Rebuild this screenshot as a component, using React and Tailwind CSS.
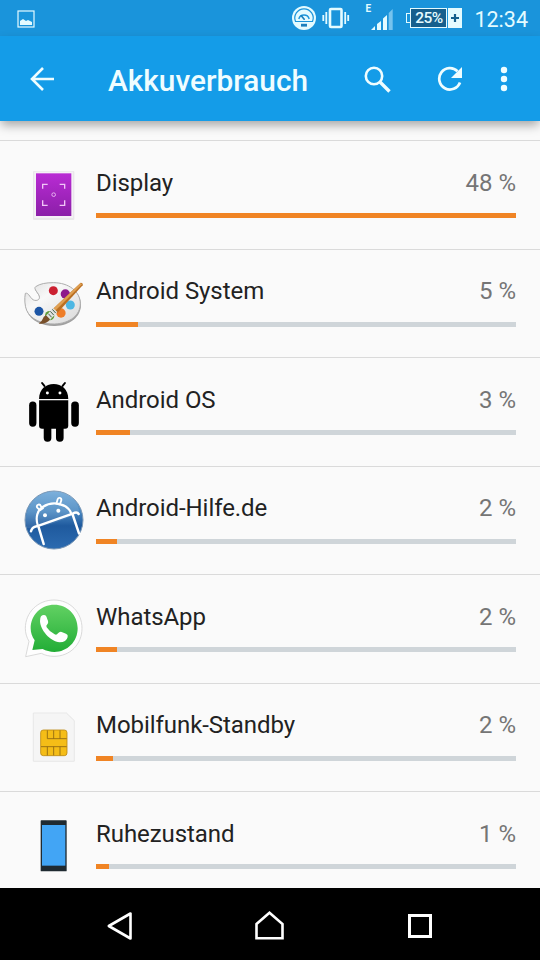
import React from "react";

const DisplayIcon = () => (
  <svg viewBox="42 12 180 180" className="h-[60px] w-[60px]">
    <defs>
      <linearGradient id="display-bg" x1="0" y1="0" x2="0" y2="1">
        <stop offset="0" stopColor="#b92bd4" />
        <stop offset="1" stopColor="#8b1fa8" />
      </linearGradient>
    </defs>
    <rect x="69" y="33" width="124" height="147" rx="3" fill="#e9e8ea" />
    <rect x="73" y="35" width="116" height="139" fill="#f5f0f6" />
    <rect x="78" y="40" width="106" height="128" fill="url(#display-bg)" />
    <g fill="none" stroke="#f0c6f7" strokeWidth="4">
      <path d="M98 86V73h15M149 73h15v13M98 121v15h15M149 136h15v-15" />
      <circle cx="131" cy="104" r="5.5" strokeWidth="2.5" />
    </g>
  </svg>
);

const PaletteIcon = () => (
  <svg viewBox="42 24 180 180" className="h-[60px] w-[60px]">
    <defs>
      <linearGradient id="palette-bg" x1="0" y1="0" x2="1" y2="1">
        <stop offset="0" stopColor="#dedede" />
        <stop offset="0.35" stopColor="#f8f8f8" />
        <stop offset="1" stopColor="#d8d8d8" />
      </linearGradient>
    </defs>
    <path
      d="M46 85C43 100 44 123 50 136C62 166 98 181 134 180C180 178 212 152 212 116C212 79 176 53 130 53C108 53 90 56 77 65C70 70 81 80 86 89C92 100 86 108 74 106C61 104 57 81 46 85Z"
      fill="#a0a0a0"
      transform="translate(1 3)"
    />
    <path
      d="M46 85C43 100 44 123 50 136C62 164 98 178 134 177C180 175 211 150 211 116C211 79 176 53 130 53C108 53 90 56 77 65C70 70 81 80 86 89C92 100 86 108 74 106C61 104 57 81 46 85Z"
      fill="url(#palette-bg)"
      stroke="#adadad"
      strokeWidth="3"
    />
    <circle cx="130" cy="77" r="13.5" fill="#cb2031" />
    <circle cx="166" cy="87" r="14" fill="#8e1b8c" />
    <circle cx="181" cy="120" r="13.5" fill="#4db7e3" />
    <circle cx="153" cy="144" r="14" fill="#ee7d28" />
    <circle cx="119" cy="152" r="14" fill="#5c9a35" />
    <circle cx="87" cy="139" r="13.5" fill="#1c55a5" />
    <path d="M212 53q8 0 6 8L142 144l-14-11Z" fill="#b96f22" />
    <path d="M212 54L128 133l7 5L216 58Z" fill="#e0a052" />
    <path d="M129 129l13 12-22 24-13-12Z" fill="#dfe3e0" />
    <path d="M127 133l10 11M121 139l10 11M115 146l10 11" stroke="#47604d" strokeWidth="3" />
    <path d="M108 151l12 12q-10 16-34 13 10-7 12-14 2-7 10-11Z" fill="#79502a" />
  </svg>
);

const AndroidIcon = () => (
  <svg viewBox="42 33 180 184" className="h-[61px] w-[60px]">
    <path d="M103 48l-7-9M158 48l7-9" stroke="#000" strokeWidth="6" strokeLinecap="round" />
    <path d="M87 87C87 58 107 42 131 42s44 16 44 45Z" />
    <circle cx="112" cy="69" r="4.5" fill="#fff" />
    <circle cx="150" cy="69" r="4.5" fill="#fff" />
    <path d="M87 91h88v77q0 9-9 9H96q-9 0-9-9Z" />
    <rect x="57" y="95" width="22" height="76" rx="11" />
    <rect x="184" y="95" width="23" height="76" rx="11" />
    <rect x="101" y="160" width="23" height="56" rx="11" />
    <rect x="138" y="160" width="23" height="56" rx="11" />
  </svg>
);

const HilfeIcon = () => (
  <svg viewBox="42 30 180 180" className="h-[60px] w-[60px]">
    <defs>
      <linearGradient id="hilfe-bg" x1="0" y1="0" x2="0" y2="1">
        <stop offset="0" stopColor="#6ea8d8" />
        <stop offset="0.35" stopColor="#4b89c2" />
        <stop offset="0.6" stopColor="#1f5a9e" />
        <stop offset="1" stopColor="#2c6bb0" />
      </linearGradient>
    </defs>
    <circle cx="132" cy="120" r="87" fill="url(#hilfe-bg)" stroke="#7b98b6" strokeWidth="3" />
    <path d="M50 145Q110 145 208 97Q200 38 132 34Q56 42 46 120Z" fill="#fff" opacity="0.1" />
    <g fill="none" stroke="#fff" strokeLinecap="round" strokeLinejoin="round">
      <path d="M63 154Q66 141 80 139L188 101Q201 94 206 102" strokeWidth="7.5" />
      <path d="M83 135C76 112 82 91 98 81C115 70 134 68 151 73C168 77 180 88 184 102" strokeWidth="6.5" />
      <path d="M86 142L101 192M188 104L207 160" strokeWidth="7.5" />
      <path d="M90 91L81 82Q79 76 85 74Q90 72 93 79L99 85Z" strokeWidth="5.5" />
      <path d="M139 71L143 58Q145 52 151 54Q156 57 153 64L149 74Z" strokeWidth="5.5" />
    </g>
    <circle cx="105" cy="106" r="6" fill="#fff" />
    <circle cx="145" cy="92" r="6" fill="#fff" />
  </svg>
);

const WhatsAppIcon = () => (
  <svg viewBox="42 24 180 180" className="h-[60px] w-[60px]">
    <defs>
      <linearGradient id="wa-bg" x1="0" y1="0" x2="0" y2="1">
        <stop offset="0" stopColor="#62d163" />
        <stop offset="1" stopColor="#22ad36" />
      </linearGradient>
    </defs>
    <path
      d="M132 30C180 30 216 67 216 115C216 163 180 199 132 199C118 199 105 196 94 190L47 200L57 154C50 142 46 129 46 115C46 67 84 30 132 30Z"
      fill="#fefefe"
      stroke="#d2d2d2"
      strokeWidth="2.5"
    />
    <path
      d="M133 44C172 44 203 75 203 115C203 155 172 186 133 186C120 186 108 182 98 177L67 180L74 151C66 140 62 128 62 115C62 75 93 44 133 44Z"
      fill="url(#wa-bg)"
    />
    <path
      d="M93 79Q99 73 106 76Q110 79 112 88Q117 98 112 103Q107 107 110 112Q119 126 134 133Q140 136 144 130Q149 124 155 126L168 131Q175 134 173 141Q169 157 149 157C120 154 91 120 90 93Q90 84 93 79Z"
      fill="#fff"
    />
  </svg>
);

const SimIcon = () => (
  <svg viewBox="42 21 180 180" className="h-[60px] w-[60px]">
    <path d="M70 39h99l24 23v122H70Z" fill="#f5f5f5" stroke="#e6e6e6" strokeWidth="2.5" />
    <path d="M169 39l24 23" stroke="#e8e8e8" strokeWidth="2" />
    <rect x="92" y="90" width="79" height="77" rx="8" fill="#f5bd17" stroke="#bd8a13" strokeWidth="2.5" />
    <path
      d="M112 91v25h58M131 91v25M150 91v25M93 140h77M112 140v26M131 140v26M150 140v26"
      fill="none"
      stroke="#8a6512"
      strokeWidth="2.5"
    />
  </svg>
);

const PhoneIcon = () => (
  <svg viewBox="42 15 180 180" className="h-[60px] w-[60px]">
    <rect x="92" y="31" width="78" height="153" rx="2" fill="#1f2a31" />
    <rect x="96" y="45" width="70" height="122" fill="#42a5f5" />
  </svg>
);

// bar is the filled width of the 420px track
const items = [
  { name: "Display", percent: "48 %", bar: 420, Icon: DisplayIcon },
  { name: "Android System", percent: "5 %", bar: 42, Icon: PaletteIcon },
  { name: "Android OS", percent: "3 %", bar: 34, Icon: AndroidIcon },
  { name: "Android-Hilfe.de", percent: "2 %", bar: 21, Icon: HilfeIcon },
  { name: "WhatsApp", percent: "2 %", bar: 21, Icon: WhatsAppIcon },
  { name: "Mobilfunk-Standby", percent: "2 %", bar: 17, Icon: SimIcon },
  { name: "Ruhezustand", percent: "1 %", bar: 13, Icon: PhoneIcon },
];

function StatusBar() {
  return (
    <div className="flex h-9 shrink-0 items-center bg-[#1a94db] pr-3 pl-[17px] text-[#e4fbff]">
      <svg viewBox="0 0 18 18" className="mt-0.5 h-[18px] w-[18px]">
        <rect x="1" y="1" width="16" height="16" fill="none" stroke="currentColor" strokeWidth="1.2" />
        <path d="M3 15v-4l3-2 3 2 2-1 4 2v3Z" fill="currentColor" />
      </svg>

      <svg viewBox="0 0 24 24" className="ml-auto h-6 w-6">
        <circle cx="12" cy="12" r="12" fill="currentColor" />
        <path d="M3.5 15.5a9.2 9.2 0 1 1 17 0Z" fill="none" stroke="#1a94db" strokeWidth="1.2" />
        <path d="M6.8 13a5.4 5.4 0 0 1 10.4 0" fill="none" stroke="#1a94db" strokeWidth="1.4" />
        <path d="M9.3 9.8l2.9 3.4" stroke="#1a7fbd" strokeWidth="1.7" strokeLinecap="round" />
        <rect x="9" y="17.8" width="6" height="2.8" fill="#1a7fbd" />
      </svg>

      <svg viewBox="0 0 28 22" className="ml-1.5 h-[22px] w-7">
        <rect x="8" y="2" width="11.5" height="18" rx="1" fill="none" stroke="currentColor" strokeWidth="2.6" />
        <path d="M1.3 8v6M4.3 5v12M23.2 5v12M26.2 8v6" stroke="currentColor" strokeWidth="1.8" />
      </svg>

      <div className="ml-[15px] flex h-[26px] items-start">
        <span className="w-[5px] text-[10px] leading-[8px] font-bold">E</span>
        <svg viewBox="0 0 23 26" className="h-[26px] w-[23px]">
          <path d="M1 25h4v-4ZM7 25h4v-9l-4 3ZM13 25h4v-15l-4 3.5Z" fill="currentColor" />
          <path d="M18.7 25h4V4l-4 4Z" fill="#76c3ee" />
        </svg>
      </div>

      <div className="ml-[13px] flex h-5 items-center">
        <div className="h-2.5 w-1 border border-r-0 border-current" />
        <div className="flex h-5 w-[37px] items-center justify-center border border-current bg-[#155f8d] pt-0.5 text-[15.5px] font-medium tracking-[-0.5px]">
          25%
        </div>
        <div className="ml-px flex h-5 w-3.5 items-center justify-center bg-[#e4fbff]">
          <svg viewBox="0 0 10 10" className="h-2.5 w-2.5">
            <path d="M5 1v8M1 5h8" stroke="#155f8d" strokeWidth="2.2" />
          </svg>
        </div>
      </div>

      <span className="mt-1 ml-3 text-[21.5px] leading-none">12:34</span>
    </div>
  );
}

function AppBar() {
  return (
    <header className="z-10 flex h-[85px] shrink-0 items-center bg-[#149ce8] pl-[29px] text-[#effdff] shadow-[0_5px_10px_-1px_rgba(0,0,0,0.35)]">
      <svg viewBox="0 0 26 24" className="mt-px h-6 w-[26px]">
        <path d="M14 1L3 12l11 11M3 12h22" fill="none" stroke="currentColor" strokeWidth="2.6" />
      </svg>
      <h1 className="mt-1 ml-[53px] w-[200px] text-[29.8px] leading-none font-medium whitespace-nowrap">
        Akkuverbrauch
      </h1>
      <svg viewBox="0 0 28 28" className="mt-0.5 ml-14 h-7 w-7">
        <circle cx="10" cy="10" r="8.2" fill="none" stroke="currentColor" strokeWidth="2.6" />
        <path d="M15.5 15.5l10 10" stroke="currentColor" strokeWidth="3.4" />
      </svg>
      <svg viewBox="0 0 26 26" className="mt-px ml-[45px] h-[26px] w-[26px]">
        <path d="M20.5 5.2A10.7 10.7 0 1 0 23 16.5" fill="none" stroke="currentColor" strokeWidth="2.7" />
        <path d="M25 1v11H14Z" fill="currentColor" />
      </svg>
      <svg viewBox="0 0 8 26" className="mt-px ml-[37px] h-[26px] w-2">
        <circle cx="4" cy="4" r="3.2" fill="currentColor" />
        <circle cx="4" cy="13" r="3.2" fill="currentColor" />
        <circle cx="4" cy="22" r="3.2" fill="currentColor" />
      </svg>
    </header>
  );
}

function UsageRow({ item }) {
  const { name, percent, bar, Icon } = item;
  return (
    <li className="flex h-[108.5px] items-start gap-3 border-t border-[#dadada] px-6 pt-[23px]">
      <Icon />
      <div className="flex-1">
        <div className="flex h-[49px] justify-between pt-[2.5px] text-2xl leading-8">
          <span className="tracking-[-0.06px] text-[#222]">{name}</span>
          <span className="text-[#757575]">{percent}</span>
        </div>
        <div className="h-[5px] bg-[#cfd5d9]">
          <div className="h-full bg-[#f08424]" style={{ width: bar }} />
        </div>
      </div>
    </li>
  );
}

function NavBar() {
  return (
    <nav className="flex h-[72px] shrink-0 items-center justify-center bg-black text-white">
      <div className="flex w-[150px] justify-center">
        <svg viewBox="0 0 26 30" className="mt-1 h-[30px] w-[26px]">
          <path d="M1.8 15L23.5 2.5v25Z" fill="none" stroke="currentColor" strokeWidth="2.6" strokeLinejoin="round" />
        </svg>
      </div>
      <div className="flex w-[150px] justify-center">
        <svg viewBox="0 0 30 30" className="mt-0.5 h-[30px] w-[30px]">
          <path d="M1.5 14L14.5 2.8L27.5 14v14.2h-26Z" fill="none" stroke="currentColor" strokeWidth="2.6" />
        </svg>
      </div>
      <div className="flex w-[150px] justify-center">
        <div className="mt-1 h-6 w-6 border-[3px] border-current" />
      </div>
    </nav>
  );
}

export default function App() {
  return (
    <div className="flex h-[960px] w-[540px] flex-col overflow-hidden bg-[#fafafa] font-[Roboto,sans-serif]">
      <StatusBar />
      <AppBar />
      <main className="min-h-0 flex-1 overflow-hidden pt-[19px]">
        <ul>
          {items.map((item) => (
            <UsageRow key={item.name} item={item} />
          ))}
        </ul>
      </main>
      <NavBar />
    </div>
  );
}
